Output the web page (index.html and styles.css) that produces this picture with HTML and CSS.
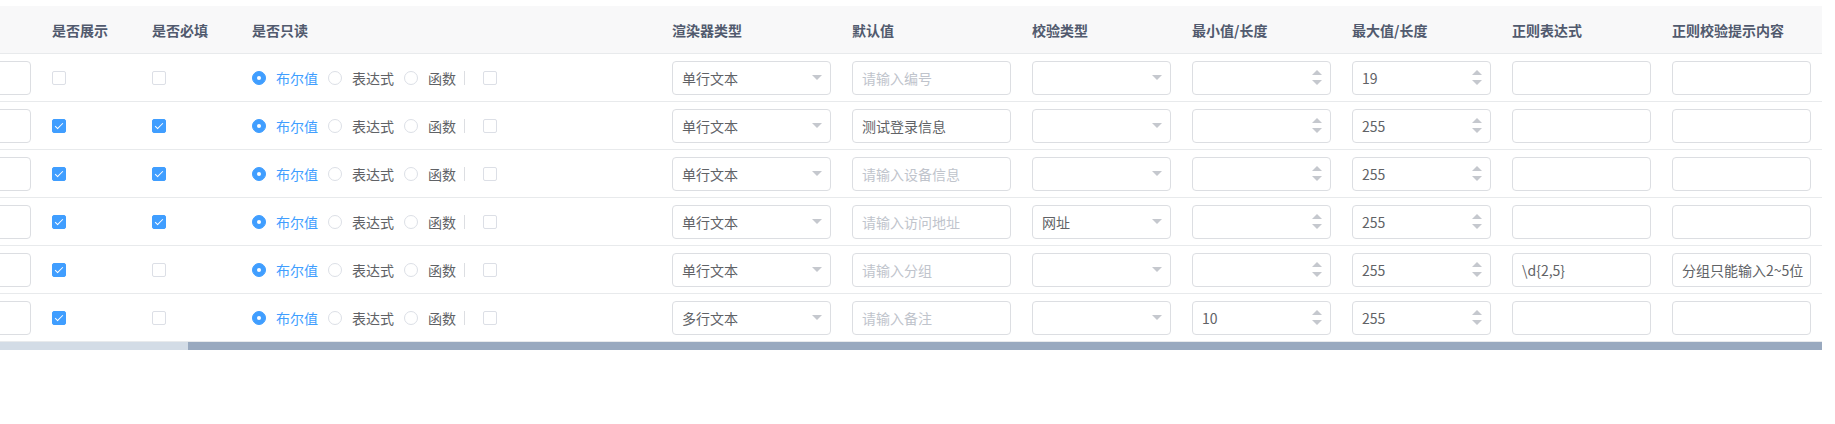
FILE: index.html
```html
<!DOCTYPE html>
<html lang="zh-CN">
<head>
<meta charset="utf-8">
<title>字段配置</title>
<link rel="stylesheet" href="styles.css">
</head>
<body>
<div class="table-wrap">
  <div class="table">
    <div class="row head">
      <div class="cell"></div>
      <div class="cell">是否展示</div>
      <div class="cell">是否必填</div>
      <div class="cell">是否只读</div>
      <div class="cell">渲染器类型</div>
      <div class="cell">默认值</div>
      <div class="cell">校验类型</div>
      <div class="cell">最小值/长度</div>
      <div class="cell">最大值/长度</div>
      <div class="cell">正则表达式</div>
      <div class="cell">正则校验提示内容</div>
    </div>

    <div class="row">
      <div class="cell"><div class="input"></div></div>
      <div class="cell"><span class="cb"></span></div>
      <div class="cell"><span class="cb"></span></div>
      <div class="cell radios"><span class="radio on"></span><span class="rl on">布尔值</span><span class="radio"></span><span class="rl">表达式</span><span class="radio"></span><span class="rl">函数</span><span class="sep"></span><span class="cb"></span></div>
      <div class="cell"><div class="input select wide"><span>单行文本</span><i class="caret"></i></div></div>
      <div class="cell"><div class="input wide ph">请输入编号</div></div>
      <div class="cell"><div class="input select"><span></span><i class="caret"></i></div></div>
      <div class="cell"><div class="input num"><span></span><i class="spin"><b class="up"></b><b class="down"></b></i></div></div>
      <div class="cell"><div class="input num"><span>19</span><i class="spin"><b class="up"></b><b class="down"></b></i></div></div>
      <div class="cell"><div class="input"></div></div>
      <div class="cell"><div class="input"></div></div>
    </div>

    <div class="row">
      <div class="cell"><div class="input"></div></div>
      <div class="cell"><span class="cb checked"></span></div>
      <div class="cell"><span class="cb checked"></span></div>
      <div class="cell radios"><span class="radio on"></span><span class="rl on">布尔值</span><span class="radio"></span><span class="rl">表达式</span><span class="radio"></span><span class="rl">函数</span><span class="sep"></span><span class="cb"></span></div>
      <div class="cell"><div class="input select wide"><span>单行文本</span><i class="caret"></i></div></div>
      <div class="cell"><div class="input wide">测试登录信息</div></div>
      <div class="cell"><div class="input select"><span></span><i class="caret"></i></div></div>
      <div class="cell"><div class="input num"><span></span><i class="spin"><b class="up"></b><b class="down"></b></i></div></div>
      <div class="cell"><div class="input num"><span>255</span><i class="spin"><b class="up"></b><b class="down"></b></i></div></div>
      <div class="cell"><div class="input"></div></div>
      <div class="cell"><div class="input"></div></div>
    </div>

    <div class="row">
      <div class="cell"><div class="input"></div></div>
      <div class="cell"><span class="cb checked"></span></div>
      <div class="cell"><span class="cb checked"></span></div>
      <div class="cell radios"><span class="radio on"></span><span class="rl on">布尔值</span><span class="radio"></span><span class="rl">表达式</span><span class="radio"></span><span class="rl">函数</span><span class="sep"></span><span class="cb"></span></div>
      <div class="cell"><div class="input select wide"><span>单行文本</span><i class="caret"></i></div></div>
      <div class="cell"><div class="input wide ph">请输入设备信息</div></div>
      <div class="cell"><div class="input select"><span></span><i class="caret"></i></div></div>
      <div class="cell"><div class="input num"><span></span><i class="spin"><b class="up"></b><b class="down"></b></i></div></div>
      <div class="cell"><div class="input num"><span>255</span><i class="spin"><b class="up"></b><b class="down"></b></i></div></div>
      <div class="cell"><div class="input"></div></div>
      <div class="cell"><div class="input"></div></div>
    </div>

    <div class="row">
      <div class="cell"><div class="input"></div></div>
      <div class="cell"><span class="cb checked"></span></div>
      <div class="cell"><span class="cb checked"></span></div>
      <div class="cell radios"><span class="radio on"></span><span class="rl on">布尔值</span><span class="radio"></span><span class="rl">表达式</span><span class="radio"></span><span class="rl">函数</span><span class="sep"></span><span class="cb"></span></div>
      <div class="cell"><div class="input select wide"><span>单行文本</span><i class="caret"></i></div></div>
      <div class="cell"><div class="input wide ph">请输入访问地址</div></div>
      <div class="cell"><div class="input select"><span>网址</span><i class="caret"></i></div></div>
      <div class="cell"><div class="input num"><span></span><i class="spin"><b class="up"></b><b class="down"></b></i></div></div>
      <div class="cell"><div class="input num"><span>255</span><i class="spin"><b class="up"></b><b class="down"></b></i></div></div>
      <div class="cell"><div class="input"></div></div>
      <div class="cell"><div class="input"></div></div>
    </div>

    <div class="row">
      <div class="cell"><div class="input"></div></div>
      <div class="cell"><span class="cb checked"></span></div>
      <div class="cell"><span class="cb"></span></div>
      <div class="cell radios"><span class="radio on"></span><span class="rl on">布尔值</span><span class="radio"></span><span class="rl">表达式</span><span class="radio"></span><span class="rl">函数</span><span class="sep"></span><span class="cb"></span></div>
      <div class="cell"><div class="input select wide"><span>单行文本</span><i class="caret"></i></div></div>
      <div class="cell"><div class="input wide ph">请输入分组</div></div>
      <div class="cell"><div class="input select"><span></span><i class="caret"></i></div></div>
      <div class="cell"><div class="input num"><span></span><i class="spin"><b class="up"></b><b class="down"></b></i></div></div>
      <div class="cell"><div class="input num"><span>255</span><i class="spin"><b class="up"></b><b class="down"></b></i></div></div>
      <div class="cell"><div class="input">\d{2,5}</div></div>
      <div class="cell"><div class="input">分组只能输入2~5位</div></div>
    </div>

    <div class="row">
      <div class="cell"><div class="input"></div></div>
      <div class="cell"><span class="cb checked"></span></div>
      <div class="cell"><span class="cb"></span></div>
      <div class="cell radios"><span class="radio on"></span><span class="rl on">布尔值</span><span class="radio"></span><span class="rl">表达式</span><span class="radio"></span><span class="rl">函数</span><span class="sep"></span><span class="cb"></span></div>
      <div class="cell"><div class="input select wide"><span>多行文本</span><i class="caret"></i></div></div>
      <div class="cell"><div class="input wide ph">请输入备注</div></div>
      <div class="cell"><div class="input select"><span></span><i class="caret"></i></div></div>
      <div class="cell"><div class="input num"><span>10</span><i class="spin"><b class="up"></b><b class="down"></b></i></div></div>
      <div class="cell"><div class="input num"><span>255</span><i class="spin"><b class="up"></b><b class="down"></b></i></div></div>
      <div class="cell"><div class="input"></div></div>
      <div class="cell"><div class="input"></div></div>
    </div>
  </div>
  <div class="scrollbar"><div class="thumb"></div></div>
</div>
</body>
</html>
```
FILE: styles.css
```css
html, body {
  margin: 0;
  padding: 0;
  background: #fff;
}
body {
  font-family: "Noto Sans CJK SC", "Noto Sans", sans-serif;
  font-size: 14px;
  color: #606266;
}
.table-wrap {
  width: 1822px;
  margin-top: 6px;
  overflow: hidden;
}
.table {
  width: 1940px;
  margin-left: -118px;
}
.row {
  display: grid;
  grid-template-columns: 160px 100px 100px 420px 180px 180px 160px 160px 160px 160px 160px;
  height: 48px;
  border-bottom: 1px solid #e8eaec;
  box-sizing: border-box;
}
.row.head {
  height: 48px;
  background: #f8f8f9;
  color: #515a6e;
  font-weight: bold;
}
.cell {
  display: flex;
  align-items: center;
  padding-left: 10px;
  white-space: nowrap;
  overflow: hidden;
}
.input {
  box-sizing: border-box;
  width: 139px;
  height: 34px;
  border: 1px solid #dcdee2;
  border-radius: 4px;
  background: #fff;
  display: flex;
  align-items: center;
  padding: 0 9px;
  color: #606266;
  line-height: 1;
  overflow: hidden;
}
.input.wide {
  width: 159px;
}
.input.ph {
  color: #c0c4cc;
}
.input.select,
.input.num {
  justify-content: space-between;
  padding-right: 8px;
}
.caret {
  width: 0;
  height: 0;
  border-left: 5px solid transparent;
  border-right: 5px solid transparent;
  border-top: 5px solid #c5c8ce;
}
.spin {
  display: flex;
  flex-direction: column;
  gap: 5px;
}
.spin .up {
  width: 0;
  height: 0;
  border-left: 5px solid transparent;
  border-right: 5px solid transparent;
  border-bottom: 5px solid #c5c8ce;
}
.spin .down {
  width: 0;
  height: 0;
  border-left: 5px solid transparent;
  border-right: 5px solid transparent;
  border-top: 5px solid #c5c8ce;
}
.cb {
  box-sizing: border-box;
  width: 14px;
  height: 14px;
  border: 1px solid #dcdfe6;
  border-radius: 2px;
  background: #fff;
  flex-shrink: 0;
  position: relative;
}
.cb.checked {
  background: #409eff;
  border-color: #409eff;
}
.cb.checked::after {
  content: "";
  position: absolute;
  left: 4px;
  top: 1px;
  width: 3px;
  height: 7px;
  border: 1px solid #fff;
  border-top: 0;
  border-left: 0;
  transform: rotate(45deg);
}
.radios .radio {
  box-sizing: border-box;
  width: 14px;
  height: 14px;
  border: 1px solid #dcdfe6;
  border-radius: 50%;
  background: #fff;
  flex-shrink: 0;
  margin-right: 10px;
  position: relative;
}
.radios .radio.on {
  background: #409eff;
  border-color: #409eff;
}
.radios .radio.on::after {
  content: "";
  position: absolute;
  left: 4px;
  top: 4px;
  width: 4px;
  height: 4px;
  border-radius: 50%;
  background: #fff;
}
.rl {
  margin-right: 10px;
  color: #606266;
}
.rl.on {
  color: #409eff;
}
.sep {
  width: 1px;
  height: 14px;
  background: #dcdee2;
  margin: 0 18px 0 -2px;
}
.scrollbar {
  height: 8px;
  background: #d3dce6;
  display: flex;
}
.thumb {
  margin-left: 188px;
  flex: 1;
  background: #99a9bf;
}
```
